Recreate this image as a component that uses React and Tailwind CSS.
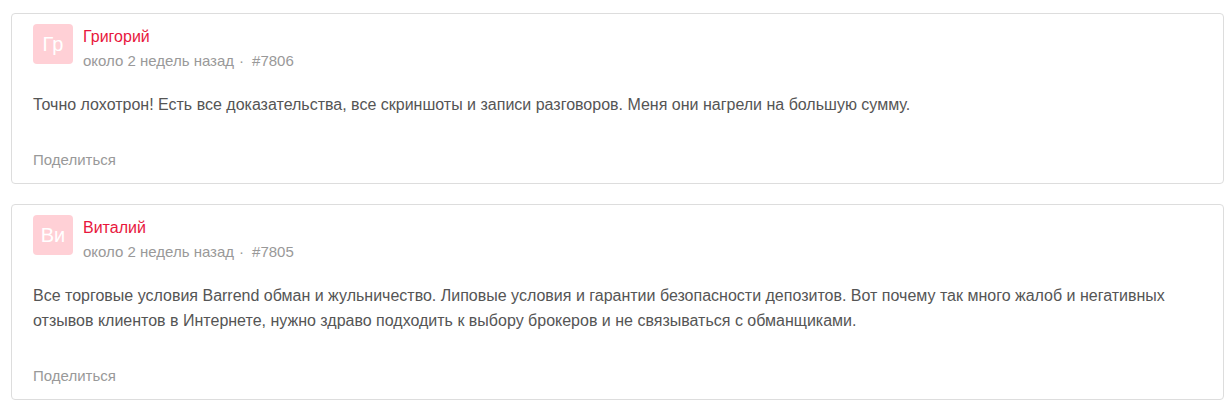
import React from 'react'

const reviews = [
  {
    initials: 'Гр',
    name: 'Григорий',
    time: 'около 2 недель назад',
    id: '#7806',
    text: 'Точно лохотрон! Есть все доказательства, все скриншоты и записи разговоров. Меня они нагрели на большую сумму.',
  },
  {
    initials: 'Ви',
    name: 'Виталий',
    time: 'около 2 недель назад',
    id: '#7805',
    text: 'Все торговые условия Barrend обман и жульничество. Липовые условия и гарантии безопасности депозитов. Вот почему так много жалоб и негативных отзывов клиентов в Интернете, нужно здраво подходить к выбору брокеров и не связываться с обманщиками.',
  },
]

function Review({ r }) {
  return (
    <div className="border border-[#dddddd] rounded-[4px] bg-white pt-[10px] pb-[13px] px-[21px]">
      <div className="flex items-start">
        <div className="w-10 h-10 rounded-[4px] bg-[#ffd0d6] text-white text-[20px] flex items-center justify-center shrink-0">
          {r.initials}
        </div>
        <div className="ml-[10px] mt-[3px]">
          <div className="text-[16px] leading-[20px] text-[#e8173d]">{r.name}</div>
          <div className="mt-[4px] text-[15px] leading-[20px] text-[#999999] flex items-center">
            <span>{r.time}</span>
            <span className="ml-[5px] mr-[8px]">·</span>
            <span>{r.id}</span>
          </div>
        </div>
      </div>
      <div className="mt-[21px] text-[16px] leading-[25px] text-[#555555]">{r.text}</div>
      <div className="mt-[33px] text-[15px] leading-[20px] text-[#999999]">Поделиться</div>
    </div>
  )
}

export default function App() {
  return (
    <div className="bg-white w-full min-h-[401px] pt-[13px] pl-[11px] pr-[7px] font-['Liberation_Sans',Arial,sans-serif]">
      <div className="space-y-[20px]">
        {reviews.map((r) => (
          <Review key={r.id} r={r} />
        ))}
      </div>
    </div>
  )
}
